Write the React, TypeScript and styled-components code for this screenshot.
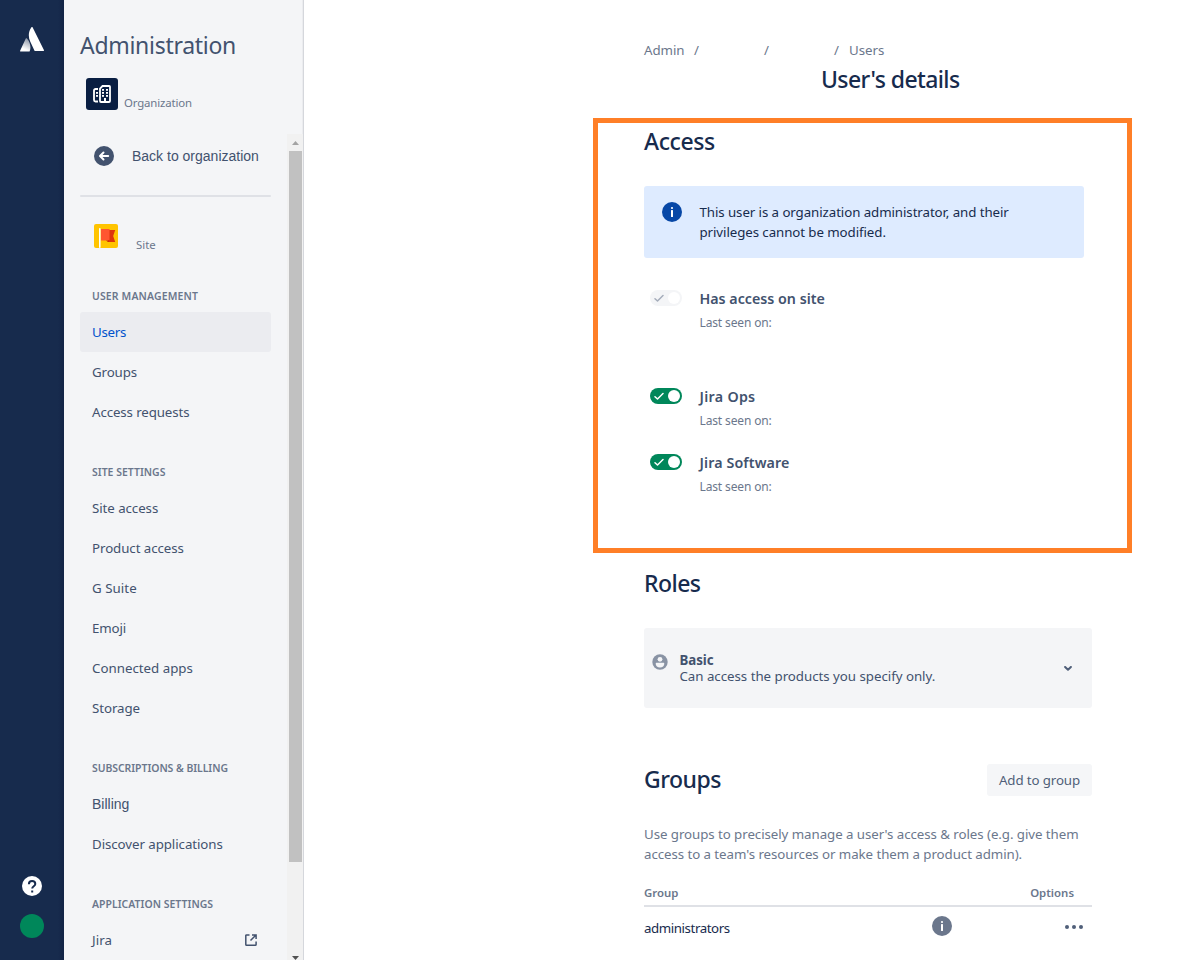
import React from 'react';
import styled, { createGlobalStyle, css } from 'styled-components';

const GlobalStyle = createGlobalStyle`
  * { box-sizing: border-box; }
  html, body { margin: 0; padding: 0; height: 960px; overflow: hidden; background: #fff; }
  body { font-family: "Noto Sans", "Open Sans", sans-serif; font-size: 13.3px; color: #172b4d; }
  h1, h2, h3, p, ul { margin: 0; padding: 0; }
  svg { display: block; flex: none; }
`;

const Page = styled.div`
  display: flex;
  width: 1197px;
  height: 960px;
  overflow: hidden;
`;

const Rail = styled.nav`
  flex: none;
  display: flex;
  flex-direction: column;
  align-items: center;
  justify-content: space-between;
  width: 64px;
  padding: 27px 0 22px;
  background: linear-gradient(to right, transparent 58px, rgba(9, 20, 55, 0.35)), #172b4d;
`;

const RailFooter = styled.div`
  display: flex;
  flex-direction: column;
  align-items: center;
  gap: 18px;
`;

const Avatar = styled.div`
  width: 24px;
  height: 24px;
  border-radius: 50%;
  background: #00875a;
`;

const Sidebar = styled.aside`
  flex: none;
  display: flex;
  flex-direction: column;
  width: 240px;
  background: #f4f5f7;
  border-right: 1px solid #d5d7dc;
  box-shadow: inset -1px 0 0 #ebecef;
`;

const SidebarHeader = styled.header`
  flex: none;
  height: 134px;
  padding: 29px 16px 0;
`;

const SidebarTitle = styled.h1`
  font-size: 23px;
  line-height: 32px;
  font-weight: 400;
  letter-spacing: -0.29px;
  color: #42526e;
`;

const OrgRow = styled.div`
  display: flex;
  align-items: flex-end;
  gap: 6px;
  margin-top: 17px;
  padding-left: 6px;
`;

const OrgTile = styled.div`
  display: grid;
  place-items: center;
  width: 32px;
  height: 32px;
  border-radius: 3px;
  background: #091e42;
`;

const ContainerLabel = styled.span<{ $ls?: number }>`
  font-size: 11.4px;
  line-height: 16px;
  letter-spacing: ${p => p.$ls ?? 0}px;
  color: #6b778c;
`;

const OrgLabel = styled(ContainerLabel)`
  margin-bottom: -1px;
`;

const ScrollArea = styled.div`
  flex: 1;
  display: flex;
  min-height: 0;
`;

const ScrollContent = styled.div`
  flex: 1;
  padding: 2px 16px 0;
  overflow: hidden;
`;

const ScrollBar = styled.div`
  flex: none;
  display: flex;
  flex-direction: column;
  align-items: center;
  width: 16px;
  padding: 7px 0 0 1px;
  background: #f1f1f1;
`;

const ScrollThumb = styled.div`
  width: 13px;
  height: 711px;
  margin: 6px 0 94px;
  background: #c1c1c1;
`;

const BackLink = styled.div`
  display: flex;
  align-items: center;
  gap: 18px;
  height: 40px;
  padding-left: 14px;
  font-family: "Liberation Sans", Arial, sans-serif;
  font-size: 14px;
  color: #42526e;
`;

const Divider = styled.hr`
  height: 2px;
  margin: 19px 0 27px;
  border: 0;
  border-radius: 1px;
  background: #dfe1e6;
`;

const SiteRow = styled.div`
  display: flex;
  gap: 18px;
  height: 32px;
  padding-left: 14px;
  align-items: flex-start;
`;

const SiteLabel = styled.div`
  display: flex;
  padding-top: 13px;
`;

const NavSection = styled.section`
  margin-top: 32px;
`;

const NavHeading = styled.h3<{ $ls: number }>`
  height: 16px;
  margin-bottom: 8px;
  padding-left: 12px;
  font-size: 10.45px;
  line-height: 16px;
  font-weight: 600;
  letter-spacing: ${p => p.$ls}px;
  color: #6b778c;
  white-space: nowrap;
`;

const NavItem = styled.div<{ $active?: boolean; $ls?: number; $arial?: boolean }>`
  display: flex;
  align-items: center;
  justify-content: space-between;
  height: 40px;
  padding: 0 14px 0 12px;
  border-radius: 3px;
  letter-spacing: ${p => p.$ls ?? -0.07}px;
  color: #42526e;
  ${p => p.$arial && css`
    font-family: "Liberation Sans", Arial, sans-serif;
    font-size: 14px;
    letter-spacing: 0;
  `}
  ${p => p.$active && css`
    background: #ebecf0;
    color: #0052cc;
  `}
`;

const Main = styled.main`
  flex: 1;
  padding: 38px 65px 0 289px;
`;

const Column = styled.div`
  width: 448px;
  margin-left: 51px;
`;

const Breadcrumbs = styled.div`
  display: grid;
  grid-template-columns: 50px 70px 70px 15px auto;
  height: 24px;
  line-height: 24px;
  letter-spacing: -0.05px;
  color: #6b778c;
`;

const Title = styled.h2<{ $ls: number }>`
  font-size: 23px;
  line-height: 28px;
  font-weight: 500;
  letter-spacing: ${p => p.$ls}px;
  color: #172b4d;
`;

const TitleRow = styled.div`
  padding: 3px 0 0 177px;
`;

const Highlight = styled.section`
  width: 539px;
  height: 435px;
  margin-top: 25px;
  padding: 4px 43px 0 46px;
  border: 5px solid #ff7f27;
`;

const InfoPanel = styled.div`
  display: flex;
  align-items: flex-start;
  gap: 17.5px;
  width: 440px;
  height: 72px;
  margin-top: 31px;
  padding: 16px 18px;
  border-radius: 3px;
  background: #deebff;
  line-height: 20px;
  letter-spacing: -0.08px;
  white-space: nowrap;
`;

const AccessRow = styled.div<{ $top: number }>`
  display: flex;
  align-items: flex-start;
  gap: 17.5px;
  height: 50px;
  margin-top: ${p => p.$top}px;
  padding-left: 6px;
`;

const AccessName = styled.div<{ $ls: number }>`
  font-size: 14.25px;
  line-height: 20px;
  font-weight: 600;
  letter-spacing: ${p => p.$ls}px;
  color: #42526e;
`;

const LastSeen = styled.div`
  margin-top: 4px;
  font-size: 12px;
  line-height: 20px;
  letter-spacing: -0.14px;
  color: #6b778c;
`;

const Track = styled.div<{ $disabled?: boolean }>`
  display: flex;
  align-items: center;
  justify-content: space-between;
  width: 32px;
  height: 16px;
  margin-top: 1px;
  padding: 0 2px 0 4px;
  border-radius: 8px;
  background: ${p => (p.$disabled ? '#f4f5f7' : '#00875a')};
  color: ${p => (p.$disabled ? '#a5adba' : '#fff')};
`;

const Knob = styled.div`
  width: 12px;
  height: 12px;
  border-radius: 50%;
  background: #fff;
`;

const RolesBlock = styled.section`
  padding-top: 16px;
`;

const RoleCard = styled.div`
  display: flex;
  align-items: flex-start;
  height: 80px;
  margin-top: 31px;
  padding: 24px 20px 0 8px;
  border-radius: 3px;
  background: #f4f5f7;
  color: #42526e;
`;

const RoleText = styled.div`
  flex: 1;
  margin-left: 11.5px;
  line-height: 16px;
  letter-spacing: -0.03px;
`;

const RoleName = styled.div`
  font-weight: 700;
  letter-spacing: -0.06px;
`;

const AvatarSlot = styled.div`
  padding-top: 2px;
`;

const ChevronSlot = styled.div`
  padding-top: 14px;
`;

const GroupsHeader = styled.div`
  display: flex;
  align-items: flex-start;
  justify-content: space-between;
  height: 32px;
  margin-top: 56px;
  padding-top: 0;
`;

const Button = styled.button`
  width: 105px;
  height: 32px;
  padding: 0;
  border: 0;
  border-radius: 3px;
  background: #f5f6f8;
  font: 400 13.3px "Noto Sans", "Open Sans", sans-serif;
  letter-spacing: -0.12px;
  color: #505f79;
`;

const GroupsTitle = styled(Title)`
  margin-top: 1px;
`;

const Description = styled.p`
  margin-top: 28px;
  line-height: 20px;
  letter-spacing: -0.065px;
  color: #6b778c;
  white-space: nowrap;
`;

const TableHead = styled.div`
  display: flex;
  justify-content: space-between;
  height: 24px;
  margin-top: 19px;
  padding-right: 18px;
  border-bottom: 2px solid #dfe1e6;
  font-size: 11.4px;
  line-height: 20px;
  font-weight: 600;
  color: #6b778c;
`;

const TableRow = styled.div`
  display: flex;
  align-items: center;
  height: 40px;
  padding-right: 9px;
  color: #172b4d;
`;

const GroupName = styled.span`
  flex: 1;
  padding-top: 2px;
  letter-spacing: -0.43px;
`;

const RowActions = styled.div`
  display: flex;
  align-items: center;
  gap: 113px;
`;

const InfoSlot = styled.div`
  margin-bottom: 2px;
`;

const Logo = () => (
  <svg width="24" height="25" viewBox="0 0 24 25">
    <defs>
      <linearGradient id="logo-fade" x1="8.500" y1="12" x2="4" y2="22" gradientUnits="userSpaceOnUse">
        <stop offset="0" stopColor="#fff" stopOpacity="0.5" />
        <stop offset="1" stopColor="#fff" />
      </linearGradient>
    </defs>
    <path d="M7 11.500c-.4-.5-1-.4-1.200.1L.1 23.700c-.2.500.1.900.7.900h8.300c.3 0 .5-.1.600-.4 1.600-3.700.6-9.200-2.700-12.700z" fill="url(#logo-fade)" />
    <path d="M11.300.500C8.300 4.500 8.100 10 10.200 14.500l4.200 9c.2.400.5.600.9.600h7.900c.6 0 .9-.5.700-1L12.700.500c-.3-.6-1-.6-1.400 0z" fill="#fff" />
  </svg>
);

const HelpIcon = () => (
  <svg width="20" height="20" viewBox="0 0 20 20">
    <circle cx="10" cy="10" r="10" fill="#fff" />
    <path d="M6.900 8.200C6.900 6.200 8.200 5 10.100 5s3.200 1.200 3.200 2.900c0 2.300-3.100 2.300-3.100 4.600" fill="none" stroke="#172b4d" strokeWidth="2" />
    <rect x="9.200" y="14.500" width="2" height="2" fill="#172b4d" />
  </svg>
);

const BuildingIcon = () => (
  <svg width="18" height="18" viewBox="0 0 18 18" fill="none" stroke="#fff" strokeWidth="2">
    <path d="M7 16V3.500L9.500 1H16.200a.8.8 0 0 1 .8.8V16a1 1 0 0 1-1 1H8a1 1 0 0 1-1-1z" strokeWidth="1.800" />
    <path d="M5 4H2.500A1.500 1.500 0 0 0 1 5.500V15a1.500 1.500 0 0 0 1.500 1.500H5" strokeWidth="1.800" />
    <g fill="#fff" stroke="none">
      <rect x="9" y="4" width="2" height="1.800" />
      <rect x="13" y="4" width="2" height="1.800" />
      <rect x="9" y="7" width="2" height="1.800" />
      <rect x="13" y="7" width="2" height="1.800" />
      <rect x="9" y="10" width="2" height="1.800" />
      <rect x="13" y="10" width="2" height="1.800" />
      <rect x="3" y="7" width="2" height="1.800" />
      <rect x="3" y="10" width="2" height="1.800" />
      <rect x="11" y="13" width="2" height="3" />
    </g>
  </svg>
);

const BackIcon = () => (
  <svg width="20" height="20" viewBox="0 0 20 20">
    <circle cx="10" cy="10" r="10" fill="#42526e" />
    <path d="M14.200 10H6.500M9.500 6.500L6 10l3.500 3.500" fill="none" stroke="#fff" strokeWidth="2" strokeLinecap="round" strokeLinejoin="round" />
  </svg>
);

const FlagIcon = () => (
  <svg width="24" height="24" viewBox="0 0 24 24">
    <rect width="24" height="24" rx="2" fill="#ffc400" />
    <path d="M14 6h7.200l-2 6 2 6H14z" fill="#de350b" />
    <rect x="7" y="5" width="8.500" height="11.500" fill="#ff5630" />
    <path d="M12 16.500h3.500L14 18z" fill="#bf2600" />
    <rect x="5" y="4" width="1.600" height="20" rx=".8" fill="#fff" />
  </svg>
);

const ExternalIcon = () => (
  <svg width="12" height="12" viewBox="0 0 12 12" fill="none" stroke="#42526e" strokeWidth="1.500">
    <path d="M4.500.9H1.600a.8.800 0 0 0-.8.800v8.700c0 .5.300.800.800.800h8.700c.5 0 .8-.3.800-.8V7.500" />
    <path d="M7 .9h4.100V5M11 1L5.500 6.500" />
  </svg>
);

const InfoIcon = ({ fill }: { fill: string }) => (
  <svg width="20" height="20" viewBox="0 0 20 20">
    <circle cx="10" cy="10" r="10" fill={fill} />
    <rect x="9" y="8" width="2" height="7" rx=".5" fill="#fff" />
    <circle cx="10" cy="6" r="1.100" fill="#fff" />
  </svg>
);

const CheckIcon = () => (
  <svg width="10" height="8" viewBox="0 0 10 8" fill="none" stroke="currentColor" strokeWidth="1.500" strokeLinecap="round" strokeLinejoin="round">
    <path d="M1 4.700l2.500 2.300L9 1.500" />
  </svg>
);

const PersonIcon = () => (
  <svg width="16" height="16" viewBox="0 0 16 16">
    <circle cx="8" cy="8" r="7.700" fill="#8993a4" />
    <circle cx="8" cy="5.300" r="2.400" fill="#f4f5f7" />
    <path d="M3.700 9.700c0-.6.400-1 1-1h6.600c.6 0 1 .4 1 1 0 2-1.800 3.800-4.300 3.800s-4.300-1.800-4.300-3.800z" fill="#f4f5f7" />
  </svg>
);

const ChevronIcon = () => (
  <svg width="8" height="5" viewBox="0 0 8 5" fill="none" stroke="#505f79" strokeWidth="2" strokeLinecap="round" strokeLinejoin="round">
    <path d="M1.100 1L4 3.800 6.900 1" />
  </svg>
);

const MoreIcon = () => (
  <svg width="18" height="4" viewBox="0 0 18 4" fill="#505f79">
    <circle cx="2" cy="2" r="2" />
    <circle cx="9" cy="2" r="2" />
    <circle cx="16" cy="2" r="2" />
  </svg>
);

const ScrollArrow = ({ down }: { down?: boolean }) => (
  <svg width="7" height="4" viewBox="0 0 7 4">
    <path d={down ? 'M0 0h7L3.500 4z' : 'M0 4h7L3.500 0z'} fill={down ? '#505050' : '#a3a3a3'} />
  </svg>
);

const Toggle = ({ disabled }: { disabled?: boolean }) => (
  <Track $disabled={disabled}>
    <CheckIcon />
    <Knob />
  </Track>
);

type Item = { label: string; ls?: number; active?: boolean; arial?: boolean; external?: boolean };

const sections: { heading: string; ls: number; items: Item[] }[] = [
  {
    heading: 'USER MANAGEMENT',
    ls: 0.15,
    items: [
      { label: 'Users', ls: -0.25, active: true },
      { label: 'Groups', ls: -0.12 },
      { label: 'Access requests', ls: -0.11 },
    ],
  },
  {
    heading: 'SITE SETTINGS',
    ls: 0.02,
    items: [
      { label: 'Site access' },
      { label: 'Product access' },
      { label: 'G Suite', ls: 0.05 },
      { label: 'Emoji', ls: -0.12 },
      { label: 'Connected apps', ls: 0 },
      { label: 'Storage' },
    ],
  },
  {
    heading: 'SUBSCRIPTIONS & BILLING',
    ls: -0.04,
    items: [{ label: 'Billing', arial: true }, { label: 'Discover applications' }],
  },
  { heading: 'APPLICATION SETTINGS', ls: 0.03, items: [{ label: 'Jira', ls: 0.1, external: true }] },
];

const products = [
  { name: 'Has access on site', ls: 0, top: 31, disabled: true },
  { name: 'Jira Ops', ls: 0.3, top: 48 },
  { name: 'Jira Software', ls: 0.12, top: 16 },
];

export default function App() {
  return (
    <Page>
      <GlobalStyle />
      <Rail>
        <Logo />
        <RailFooter>
          <HelpIcon />
          <Avatar />
        </RailFooter>
      </Rail>

      <Sidebar>
        <SidebarHeader>
          <SidebarTitle>Administration</SidebarTitle>
          <OrgRow>
            <OrgTile>
              <BuildingIcon />
            </OrgTile>
            <OrgLabel $ls={-0.13}>Organization</OrgLabel>
          </OrgRow>
        </SidebarHeader>
        <ScrollArea>
          <ScrollContent>
            <BackLink>
              <BackIcon />
              Back to organization
            </BackLink>
            <Divider />
            <SiteRow>
              <FlagIcon />
              <SiteLabel>
                <ContainerLabel>Site</ContainerLabel>
              </SiteLabel>
            </SiteRow>
            {sections.map(section => (
              <NavSection key={section.heading}>
                <NavHeading $ls={section.ls}>{section.heading}</NavHeading>
                {section.items.map(item => (
                  <NavItem key={item.label} $active={item.active} $ls={item.ls} $arial={item.arial}>
                    {item.label}
                    {item.external && <ExternalIcon />}
                  </NavItem>
                ))}
              </NavSection>
            ))}
          </ScrollContent>
          <ScrollBar>
            <ScrollArrow />
            <ScrollThumb />
            <ScrollArrow down />
          </ScrollBar>
        </ScrollArea>
      </Sidebar>

      <Main>
        <Column>
          <Breadcrumbs>
            <span>Admin</span>
            <span>/</span>
            <span>/</span>
            <span>/</span>
            <span>Users</span>
          </Breadcrumbs>
          <TitleRow>
            <Title $ls={-0.6}>User's details</Title>
          </TitleRow>
        </Column>

        <Highlight>
          <Title $ls={-0.42}>Access</Title>
          <InfoPanel>
            <InfoIcon fill="#0747a6" />
            <p>
              This user is a organization administrator, and their
              <br />
              privileges cannot be modified.
            </p>
          </InfoPanel>
          {products.map(product => (
            <AccessRow key={product.name} $top={product.top}>
              <Toggle disabled={product.disabled} />
              <div>
                <AccessName $ls={product.ls}>{product.name}</AccessName>
                <LastSeen>Last seen on:</LastSeen>
              </div>
            </AccessRow>
          ))}
        </Highlight>

        <Column>
          <RolesBlock>
            <Title $ls={-0.55}>Roles</Title>
            <RoleCard>
              <AvatarSlot>
                <PersonIcon />
              </AvatarSlot>
              <RoleText>
                <RoleName>Basic</RoleName>
                <div>Can access the products you specify only.</div>
              </RoleText>
              <ChevronSlot>
                <ChevronIcon />
              </ChevronSlot>
            </RoleCard>
          </RolesBlock>

          <GroupsHeader>
            <GroupsTitle $ls={-0.5}>Groups</GroupsTitle>
            <Button>Add to group</Button>
          </GroupsHeader>
          <Description>
            Use groups to precisely manage a user's access &amp; roles (e.g. give them
            <br />
            access to a team's resources or make them a product admin).
          </Description>
          <TableHead>
            <span>Group</span>
            <span>Options</span>
          </TableHead>
          <TableRow>
            <GroupName>administrators</GroupName>
            <RowActions>
              <InfoSlot>
                <InfoIcon fill="#6b778c" />
              </InfoSlot>
              <MoreIcon />
            </RowActions>
          </TableRow>
        </Column>
      </Main>
    </Page>
  );
}
